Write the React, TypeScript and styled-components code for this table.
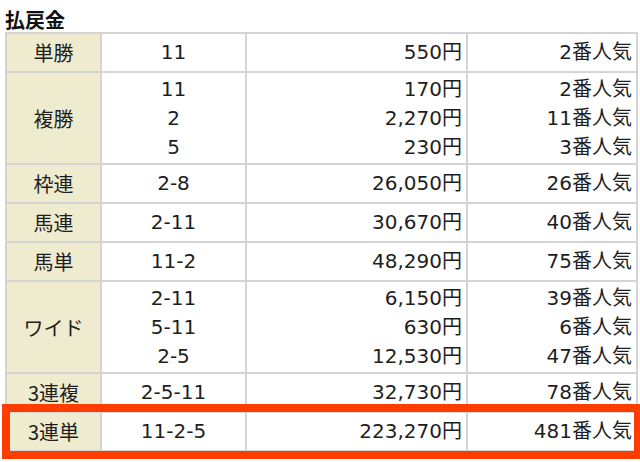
import React from "react";
import styled, { createGlobalStyle } from "styled-components";

const Global = createGlobalStyle`
  html, body { margin: 0; padding: 0; background: #ffffff; }
  body { font-family: "DejaVu Sans", "Noto Sans CJK JP", sans-serif; color: #222; }
`;

const Page = styled.div`
  width: 640px;
  height: 462px;
  padding-left: 5px;
  box-sizing: border-box;
  overflow: hidden;
`;

const Title = styled.h2`
  margin: 0;
  padding: 10px 0 0 0;
  height: 32px;
  box-sizing: border-box;
  font-family: "Noto Sans CJK JP", sans-serif;
  font-weight: 700;
  font-size: 20px;
  line-height: 20px;
  color: #111;
`;

const TableWrap = styled.div`
  position: relative;
  width: 631px;
`;

const Table = styled.table`
  width: 631px;
  border-collapse: collapse;
  table-layout: fixed;
  font-size: 20px;
`;

const Row = styled.tr<{ $multi?: boolean }>`
  height: ${(p) => (p.$multi ? "92px" : "39px")};
`;

const Cell = styled.td<{ $align?: "left" | "center" | "right"; $label?: boolean }>`
  border: 2px solid #d4d4d4;
  padding: 0 ${(p) => (p.$align === "right" ? "4px" : "0")} 0 0;
  text-align: ${(p) => p.$align ?? "center"};
  vertical-align: middle;
  background: ${(p) => (p.$label ? "#eeebcf" : "#ffffff")};
  color: #1e1e1e;
  font-family: ${(p) =>
    p.$label ? '"Noto Sans CJK JP", sans-serif' : '"DejaVu Sans", "Noto Sans CJK JP", sans-serif'};
  white-space: nowrap;
`;

const Line = styled.div`
  line-height: 29px;
`;

const Highlight = styled.div`
  position: absolute;
  left: -3px;
  right: -6px;
  bottom: -7px;
  height: 55px;
  border: 8px solid #ff3d00;
  box-sizing: border-box;
  pointer-events: none;
`;

type Item = { label: string; nums: string[]; pays: string[]; ranks: string[] };

const data: Item[] = [
  { label: "単勝", nums: ["11"], pays: ["550円"], ranks: ["2番人気"] },
  { label: "複勝", nums: ["11", "2", "5"], pays: ["170円", "2,270円", "230円"], ranks: ["2番人気", "11番人気", "3番人気"] },
  { label: "枠連", nums: ["2-8"], pays: ["26,050円"], ranks: ["26番人気"] },
  { label: "馬連", nums: ["2-11"], pays: ["30,670円"], ranks: ["40番人気"] },
  { label: "馬単", nums: ["11-2"], pays: ["48,290円"], ranks: ["75番人気"] },
  { label: "ワイド", nums: ["2-11", "5-11", "2-5"], pays: ["6,150円", "630円", "12,530円"], ranks: ["39番人気", "6番人気", "47番人気"] },
  { label: "3連複", nums: ["2-5-11"], pays: ["32,730円"], ranks: ["78番人気"] },
  { label: "3連単", nums: ["11-2-5"], pays: ["223,270円"], ranks: ["481番人気"] },
];

const Lines = ({ items }: { items: string[] }) => (
  <>
    {items.map((t, i) => (
      <Line key={i}>{t}</Line>
    ))}
  </>
);

export default function App() {
  return (
    <Page>
      <Global />
      <Title>払戻金</Title>
      <TableWrap>
        <Table>
          <colgroup>
            <col style={{ width: 95 }} />
            <col style={{ width: 145 }} />
            <col style={{ width: 221 }} />
            <col style={{ width: 170 }} />
          </colgroup>
          <tbody>
            {data.map((d) => (
              <Row key={d.label} $multi={d.nums.length > 1}>
                <Cell $label>
                  <Line>{d.label}</Line>
                </Cell>
                <Cell>
                  <Lines items={d.nums} />
                </Cell>
                <Cell $align="right">
                  <Lines items={d.pays} />
                </Cell>
                <Cell $align="right">
                  <Lines items={d.ranks} />
                </Cell>
              </Row>
            ))}
          </tbody>
        </Table>
        <Highlight />
      </TableWrap>
    </Page>
  );
}
